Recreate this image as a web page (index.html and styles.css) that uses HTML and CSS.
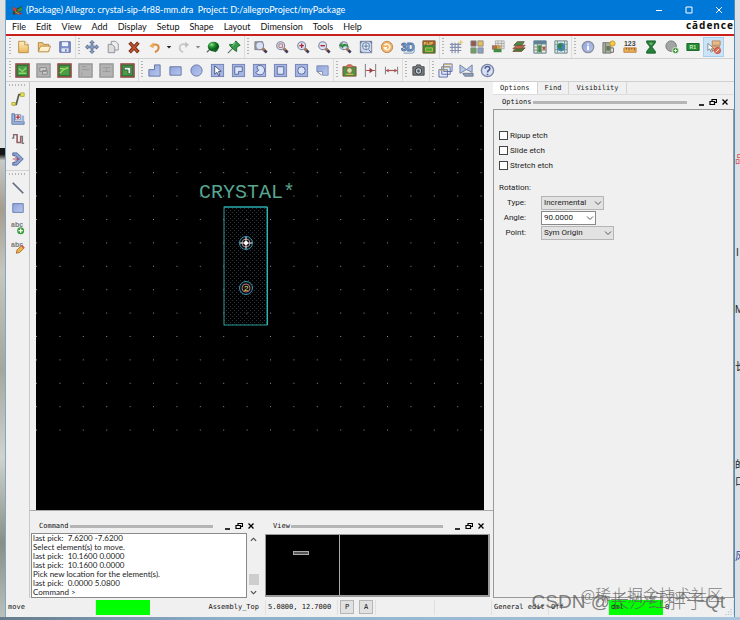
FILE: index.html
```html
<!DOCTYPE html>
<html lang="en">
<head>
<meta charset="utf-8">
<title>Allegro - crystal-sip-4r88-mm.dra</title>
<link rel="stylesheet" href="styles.css">
</head>
<body>
<svg class="defs" aria-hidden="true">
  <defs>
    <linearGradient id="blue" x1="0" y1="0" x2="1" y2="1"><stop offset="0" stop-color="#8fa3dc"/><stop offset="1" stop-color="#b9c8ee"/></linearGradient>
    <radialGradient id="green" cx=".35" cy=".3"><stop offset="0" stop-color="#8fe08a"/><stop offset=".5" stop-color="#2c9a3a"/><stop offset="1" stop-color="#0b5c1b"/></radialGradient>
    <linearGradient id="gold" x1="0" y1="0" x2="0" y2="1"><stop offset="0" stop-color="#fff0c4"/><stop offset="1" stop-color="#eab455"/></linearGradient>
    <symbol id="lens" viewBox="0 0 16 16"><path d="M9.500 9.500l5 4.800" stroke="#3d3a55" stroke-width="3"/><path d="M10 9.600l2 2" stroke="#c57a3c" stroke-width="2.400"/><circle cx="6.500" cy="6.500" r="4.500" fill="#d9e2f2" stroke="#8288a0" stroke-width="1.300"/></symbol>
    <symbol id="board" viewBox="0 0 16 16"><rect x="1" y="1" width="14" height="14" fill="#4d9a48" stroke="#9d3f43" stroke-width="1.500"/><rect x="2.500" y="2.500" width="11" height="11" fill="none" stroke="#267337"/></symbol>
    <symbol id="board-off" viewBox="0 0 16 16"><rect x="1" y="1" width="14" height="14" fill="#b3b3b3" stroke="#999" stroke-width="1.500"/></symbol>
    <symbol id="tile" viewBox="0 0 16 16"><rect x="1.500" y="1.500" width="13" height="13" fill="#a5b5e3" stroke="#7482b4"/></symbol>
    <symbol id="down" viewBox="0 0 8 8"><path d="M1 2.500l3 3 3-3" fill="none" stroke="#555"/></symbol>
    <symbol id="min" viewBox="0 0 8 8"><path d="M2 7h5" stroke="#000" stroke-width="1.600"/></symbol>
    <symbol id="float" viewBox="0 0 8 8"><path d="M3 3V1.500h4.500v3H5.500M1 3.500h4.500v3H1z" fill="none" stroke="#000" stroke-width="1.200"/></symbol>
    <symbol id="close" viewBox="0 0 8 8"><path d="M1.500 1.500l5 5M6.500 1.500l-5 5" stroke="#000" stroke-width="1.300"/></symbol>
  </defs>
</svg>
<div class="desktop">
  <div class="behind-left"></div>
  <div class="window">
    <header class="titlebar">
      <svg class="app-icon" viewBox="0 0 12 12"><path d="M1 2l4 2 6-3v5l-5 3-5 2z" fill="#244834"/><path d="M1 2l4 2v3l-4-1z" fill="#d33b32"/><path d="M6 5l5-3v4l-5 2z" fill="#348f3b"/><path d="M2 9l3-2 6 2-2 2z" fill="#b72c30"/><path d="M3 7l5 3" stroke="#65ce57"/></svg>
      <h1>(Package) Allegro: crystal-sip-4r88-mm.dra&nbsp; Project: D:/allegroProject/myPackage</h1>
      <div class="window-buttons">
        <button aria-label="Minimize"><svg viewBox="0 0 8 8"><path d="M1 4.500h6" stroke="#fff"/></svg></button>
        <button aria-label="Maximize"><svg viewBox="0 0 8 8"><path d="M1 1h6v6H1z" fill="none" stroke="#fff"/></svg></button>
        <button aria-label="Close"><svg viewBox="0 0 8 8"><path d="M1 1l6 6M7 1L1 7" stroke="#fff"/></svg></button>
      </div>
    </header>
    <nav class="menubar">
      <button>File</button><button>Edit</button><button>View</button><button>Add</button><button>Display</button><button>Setup</button><button>Shape</button><button>Layout</button><button>Dimension</button><button>Tools</button><button>Help</button>
      <span class="brand">cādence</span>
    </nav>

    <div class="toolbar">
      <div class="group">
        <button aria-label="New"><svg viewBox="0 0 16 16"><path d="M3 1.500h7l4 4v9H3z" fill="url(#gold)" stroke="#b48b45"/><path d="M10 1.500v4h4" fill="#fff5d8" stroke="#b48b45"/></svg></button>
        <button aria-label="Open"><svg viewBox="0 0 16 16"><path d="M1.500 13V3h5l1 2h6v8z" fill="#efc678" stroke="#ae803a"/><path d="M1.500 13.500L4 7h11.500L13 13.500z" fill="#fff1cd" stroke="#b88a44"/></svg></button>
        <button aria-label="Save"><svg viewBox="0 0 16 16"><path d="M2 2h12v12H2z" fill="#7e91cc" stroke="#51629f"/><path d="M4.500 2.500h7V7h-7z" fill="#eef2ff"/><path d="M4 9.500h8v4H4z" fill="#dfe6f8"/><path d="M9 10.500v2.500" stroke="#53639a" stroke-width="1.500"/></svg></button>
      </div>
      <div class="group">
        <button aria-label="Move"><svg viewBox="0 0 16 16"><path d="M8 .5L10.500 3H9v4h4V5.500L15.500 8 13 10.500V9H9v4h1.500L8 15.500 5.500 13H7V9H3v1.500L.5 8 3 5.500V7h4V3H5.500z" fill="#92a7c8" stroke="#566b91"/></svg></button>
        <button aria-label="Copy"><svg viewBox="0 0 16 16"><path d="M6 1.500h5l3 3v7H6z" fill="#ededed" stroke="#8b8f96"/><path d="M2.500 5H7l3 3v6.500H2.500z" fill="#dcdcdc" stroke="#858a91"/></svg></button>
        <button aria-label="Delete"><svg viewBox="0 0 16 16"><path d="M3 3l10 11M13 3L3 14" stroke="#6c2b1b" stroke-width="4"/><path d="M3.500 3.500l9 10M12.500 3.500l-9 10" stroke="#c0532c" stroke-width="2"/></svg></button>
        <button aria-label="Undo"><svg viewBox="0 0 16 16"><path d="M4 7c5-4 9-1 8 3-.5 2-2 3-4 4" fill="none" stroke="#d8893e" stroke-width="2.300"/><path d="M6.500 2.500v7L1.500 7z" fill="#edaa58"/></svg></button>
        <button class="drop" aria-label="Undo list"><svg viewBox="0 0 8 8"><path d="M1 2.500h6L4 6z" fill="#222"/></svg></button>
        <button aria-label="Redo"><svg viewBox="0 0 16 16"><path d="M11 6c-5-3-8 0-8 3 0 2 2 4 4 5" fill="none" stroke="#c6c6c6" stroke-width="2"/><path d="M9.500 2v7l4-3.500z" fill="#bdbdbd"/></svg></button>
        <button class="drop" aria-label="Redo list"><svg viewBox="0 0 8 8"><path d="M1 2.500h6L4 6z" fill="#888"/></svg></button>
        <button aria-label="Fix"><svg viewBox="0 0 16 16"><path d="M5 10l-4 4" stroke="#607060" stroke-width="1.500"/><ellipse cx="8.500" cy="7.500" rx="6.500" ry="5.500" fill="url(#green)"/><path d="M3 10l8 4 3-3z" fill="#16652a"/></svg></button>
        <button aria-label="Unfix"><svg viewBox="0 0 16 16"><path d="M1 15l6-6" stroke="#65756a" stroke-width="1.500"/><path d="M10 1l5 5-2 1-2 2v4L9 12 3.500 7 3 5h4l2-2z" fill="#359b48" stroke="#16632a"/><path d="M10 3L6 7" stroke="#8cdd89"/></svg></button>
      </div>
      <div class="group">
        <button aria-label="Zoom window"><svg viewBox="0 0 16 16"><path d="M1 2h9v9H1z" fill="#b1a290" stroke="#7b7b87"/><use href="#lens"/></svg></button>
        <button aria-label="Zoom fit"><svg viewBox="0 0 16 16"><use href="#lens"/><path d="M4.500 4.500h4v4h-4z" fill="none" stroke="#bd6a6c"/></svg></button>
        <button aria-label="Zoom in"><svg viewBox="0 0 16 16"><use href="#lens"/><path d="M4 6.500h5M6.500 4v5" stroke="#af2632" stroke-width="1.500"/></svg></button>
        <button aria-label="Zoom out"><svg viewBox="0 0 16 16"><use href="#lens"/><path d="M4 6.500h5" stroke="#af2632" stroke-width="1.600"/></svg></button>
        <button aria-label="Zoom previous"><svg viewBox="0 0 16 16"><use href="#lens"/><path d="M4 6c3-3 7-2 9 3-4-3-6-2-7-1v2L1 6l5-4z" fill="#368b45"/></svg></button>
        <button aria-label="Zoom selection"><svg viewBox="0 0 16 16"><path d="M1.500 1.500h13v13h-13z" fill="#cbd7eb" stroke="#6f7c99"/><circle cx="8" cy="7" r="4" fill="#eef3fb" stroke="#597399"/><path d="M5 7h6M8 4v6M2 4V2h2M12 2h2v2M2 12v2h2M11 11l3 3" stroke="#506c96" fill="none"/></svg></button>
        <button aria-label="Redraw"><svg viewBox="0 0 16 16"><circle cx="8" cy="8" r="6.500" fill="#f0b265" stroke="#b9875a"/><path d="M5 6c3-3 7 0 6 3s-5 3-6 0h3" fill="none" stroke="#fff5df" stroke-width="1.800"/></svg></button>
        <button aria-label="3D view"><svg viewBox="0 0 16 16"><text x="0" y="13" class="g-3d">3D</text><path d="M13 3l2 3v8l-2 1H3" fill="none" stroke="#6b8bb2"/></svg></button>
        <button aria-label="Flip design"><svg viewBox="0 0 16 16"><path d="M1 1h14v14H1z" fill="#378b3d" stroke="#79562c"/><path d="M1 1h14v5H1z" fill="#9e572e"/><text x="2" y="5.500" class="g-flip">FLIP</text><path d="M4 9h8v4H4z" fill="#4aab3d" stroke="#e1b63c"/></svg></button>
      </div>
      <div class="group">
        <button aria-label="Grid toggle"><svg viewBox="0 0 16 16"><path d="M3.500 3v12M7 3v12M10.500 3v12M1 5h13M1 8.500h13M1 12h13" stroke="#858eac" stroke-width="1.300"/><path d="M13.500 0v5M11 2.500h5" stroke="#e9bd53"/></svg></button>
        <button aria-label="Color"><svg viewBox="0 0 16 16"><path d="M1 1h6v6H1z" fill="#8d5a4c"/><path d="M9 1h6v6H9z" fill="#e6bd58"/><path d="M1 9h6v6H1z" fill="#67a35e"/><path d="M9 9h6v6H9z" fill="#8a9fcc"/><path d="M1 1h6v6H1zM9 1h6v6H9zM1 9h6v6H1zM9 9h6v6H9z" fill="none" stroke="#888"/></svg></button>
        <button aria-label="Shadow"><svg viewBox="0 0 16 16"><path d="M5 1h10v9H5zM8 1v9M12 1v9M5 4h10M5 7h10" fill="#e6e6e6" stroke="#aaa"/><path d="M1 6h6v5H1z" fill="#ad7158"/><path d="M3 10h9v4H3z" fill="#438a46"/><path d="M7 6h4v4H7z" fill="#cf9d3d"/></svg></button>
        <button aria-label="Layers"><svg viewBox="0 0 16 16"><path d="M1 13l4-4h10l-4 4z" fill="#3c813c" stroke="#7d4f35"/><path d="M1 10l4-4h10l-4 4z" fill="#bb6651" stroke="#7d4f35"/><path d="M2 6l4-4h8l-3 4z" fill="#4d8d47" stroke="#5e5435"/></svg></button>
        <button aria-label="Constraint manager"><svg viewBox="0 0 16 16"><path d="M1 1h14v14H1z" fill="#e5eadb" stroke="#4f7186"/><path d="M1 1h14v4H1z" fill="#5d819b"/><path d="M5 2v13M9.500 2v13M1 8h14M1 11.500h14" stroke="#718271"/><path d="M6 6h3v8H6z" fill="#348748"/><path d="M11 8h3v3h-3z" fill="#c5473c"/></svg></button>
        <button aria-label="World view"><svg viewBox="0 0 16 16"><path d="M1 1h14v14H1z" fill="#dee8df" stroke="#5a7d85"/><path d="M4 1v14M12 1v14M1 5h14M1 11h14" stroke="#78948e"/><circle cx="8" cy="8" r="5" fill="#4286b5"/><path d="M4 6l3-2 3 2-2 2 1 3-3-1z" fill="#3b8140"/></svg></button>
      </div>
      <div class="group">
        <button aria-label="Show element"><svg viewBox="0 0 16 16"><circle cx="8" cy="8" r="6.500" fill="url(#blue)" stroke="#8c8f9c" stroke-width="1.500"/><path d="M8 6.500v5M8 4v1.500" stroke="#fff" stroke-width="2"/></svg></button>
        <button aria-label="Cross section"><svg viewBox="0 0 16 16"><path d="M1 3h9v12H1z" fill="#a9aaa4" stroke="#727369"/><path d="M4 3v12" stroke="#777"/><path d="M5 7h4v5H5z" fill="#40854b"/><path d="M6 8h2v2H6z" fill="#c44"/><path d="M10 9h3v5h-3" fill="none" stroke="#555"/><circle cx="12" cy="4" r="3" fill="#f5ca43" stroke="#c09633"/></svg></button>
        <button aria-label="Measure"><svg viewBox="0 0 16 16"><text x="1" y="7" class="g-123">123</text><path d="M1 9h14v5H1z" fill="#eab35c" stroke="#bd772e"/><path d="M4 9v2M7 9v3M10 9v2M13 9v3" stroke="#865427"/></svg></button>
        <button aria-label="Timing"><svg viewBox="0 0 16 16"><path d="M3 1h10v2l-4 5 4 5v2H3v-2l4-5-4-5z" fill="#26803c" stroke="#145d26"/><path d="M5.500 3h5L8 6z" fill="#73bf68"/></svg></button>
        <button aria-label="Add circle"><svg viewBox="0 0 16 16"><circle cx="7" cy="7" r="6" fill="#a3a5a4" stroke="#727674"/><circle cx="12" cy="12" r="3.500" fill="#388f38" stroke="#d8eed8"/><path d="M12 10v4M10 12h4" stroke="#fff"/></svg></button>
        <button aria-label="Reference designator"><svg viewBox="0 0 16 16"><path d="M1 4h14v8H1z" fill="#218c35" stroke="#135f21"/><text x="4" y="10" class="g-r1">R1</text></svg></button>
        <button class="on" aria-label="Placement edit" aria-pressed="true"><svg viewBox="0 0 16 16"><path d="M6 1h9v5H6zM4 7h10v5H4z" fill="#e6bb89" stroke="#b78053"/><circle cx="12" cy="12" r="3.500" fill="#df7357" stroke="#c33f35"/><path d="M10 14l4-4" stroke="#fff"/><path d="M1 4v8l2-2 2 4 1-1-1-3h3z" fill="#fff" stroke="#555" stroke-width=".7"/></svg></button>
      </div>
    </div>

    <div class="toolbar second">
      <div class="group">
        <button aria-label="General edit mode"><svg viewBox="0 0 16 16"><use href="#board"/><path d="M4 6l4 3 4-4M4 11h8" stroke="#8bd864" fill="none" stroke-width="1.500"/></svg></button>
        <button aria-label="Placement mode"><svg viewBox="0 0 16 16"><use href="#board-off"/><path d="M4 5h7v4H4zM7 8h5v4H7z" fill="#ccc" stroke="#8a8a8a"/></svg></button>
        <button aria-label="Etch edit mode"><svg viewBox="0 0 16 16"><use href="#board"/><path d="M3 11l4-4 5-2M3 6h4" stroke="#9bdd63" fill="none" stroke-width="1.500"/></svg></button>
        <button aria-label="Signal mode"><svg viewBox="0 0 16 16"><use href="#board-off"/><path d="M4 4h5M4 7h8M4 10v3" stroke="#999"/></svg></button>
        <button aria-label="Ripup mode"><svg viewBox="0 0 16 16"><use href="#board-off"/><path d="M4 5h8M4 9h8M8 5v5" stroke="#999"/></svg></button>
        <button aria-label="Shape edit mode"><svg viewBox="0 0 16 16"><use href="#board"/><path d="M4.500 4.500h7v7h-3v-4h-4z" fill="#eee" stroke="#2b633d"/></svg></button>
      </div>
      <div class="group">
        <button aria-label="Shape polygon"><svg viewBox="0 0 16 16"><path d="M8 2h6v12H2V7h6z" fill="url(#blue)" stroke="#6674a4"/></svg></button>
        <button aria-label="Shape rectangle"><svg viewBox="0 0 16 16"><path d="M2 4h12v9H2z" fill="url(#blue)" stroke="#6674a4"/></svg></button>
        <button aria-label="Shape circle"><svg viewBox="0 0 16 16"><circle cx="8" cy="8" r="6" fill="url(#blue)" stroke="#6674a4"/></svg></button>
        <button aria-label="Shape select"><svg viewBox="0 0 16 16"><use href="#tile"/><path d="M5 3v9l2.500-2 2 4 1-1-1.500-4h3z" fill="#fff" stroke="#4b587f"/></svg></button>
        <button aria-label="Shape void polygon"><svg viewBox="0 0 16 16"><use href="#tile"/><path d="M4 4h8v5H8v3H4z" fill="#dce5fa" stroke="#596896"/></svg></button>
        <button aria-label="Shape void arc"><svg viewBox="0 0 16 16"><use href="#tile"/><path d="M5 4a5 5 0 1 1-1 6l3-2z" fill="#dce5fa" stroke="#596896"/></svg></button>
        <button aria-label="Void rectangle"><svg viewBox="0 0 16 16"><use href="#tile"/><path d="M4.500 4h7v8h-7z" fill="#dce5fa" stroke="#596896"/></svg></button>
        <button aria-label="Void circle"><svg viewBox="0 0 16 16"><use href="#tile"/><circle cx="8" cy="8" r="4" fill="#dce5fa" stroke="#596896"/></svg></button>
        <button aria-label="Delete islands"><svg viewBox="0 0 16 16"><path d="M2 3h12v10H8V9H2z" fill="url(#blue)" stroke="#818db5"/><path d="M2 9l5 4" stroke="#777"/></svg></button>
      </div>
      <div class="group">
        <button aria-label="Place component"><svg viewBox="0 0 16 16"><path d="M1 4h14v10H1z" fill="#4b9345" stroke="#87522f"/><path d="M4 4l2-2h4l2 2" fill="#dd825b" stroke="#a64238"/><circle cx="8" cy="8" r="3" fill="#cbe9a7" stroke="#9c5147"/><path d="M4 12h8" stroke="#e1d04b"/></svg></button>
        <button aria-label="Spacing"><svg viewBox="0 0 16 16"><path d="M2.500 1v14M13.500 1v14" stroke="#777"/><path d="M3 8h10" stroke="#a94b4b"/><path d="M7 5l4 3-4 3z" fill="#9e343b"/></svg></button>
        <button aria-label="Linear dimension"><svg viewBox="0 0 16 16"><path d="M1.500 4v8M14.500 4v8" stroke="#777"/><path d="M2 8h12" stroke="#aa5555" stroke-width="1.300"/><path d="M2 8l3-2v4zM14 8l-3-2v4z" fill="#aa5555"/></svg></button>
      </div>
      <div class="group">
        <button aria-label="Snapshot"><svg viewBox="0 0 16 16"><path d="M2 4h3l1-2h4l1 2h3v9H2z" fill="#777a7d" stroke="#484b4e"/><circle cx="8" cy="8.500" r="3.500" fill="#c4cbd0" stroke="#303337"/><circle cx="8" cy="8.500" r="1.500" fill="#4c5c69"/></svg></button>
      </div>
      <div class="group">
        <button aria-label="Cascade windows"><svg viewBox="0 0 16 16"><path d="M6 1h9v8H6zM4 4h9v8H4zM1 7h9v8H1z" fill="#e3e9fb" stroke="#5d6da4"/><path d="M6 1.500h9M4 4.500h9M1 7.500h9" stroke="#c6b263"/></svg></button>
        <button aria-label="Mirror"><svg viewBox="0 0 16 16"><path d="M1 2l7 5 6-5v8L8 7l-7 4z" fill="#b9c8e6" stroke="#7180a3"/><path d="M4 11h11v3H6z" fill="#92a0b6" stroke="#6d7890"/></svg></button>
        <button aria-label="Help"><svg viewBox="0 0 16 16"><circle cx="8" cy="8" r="6.500" fill="#dae1f4" stroke="#7c87a8" stroke-width="1.500"/><path d="M5.500 6c0-3 5-3 5 0 0 2-2.500 1.500-2.500 4M8 11.500V13" fill="none" stroke="#4e5d93" stroke-width="1.700"/></svg></button>
      </div>
    </div>

    <div class="main">
      <aside class="side-tools">
        <div class="side-group">
          <button aria-label="Add connect"><svg viewBox="0 0 16 16"><path d="M2 14h4l3-11h5" fill="none" stroke="#5b604d" stroke-width="2"/><path d="M1 12h4v3H1zM11 1h4v4h-4z" fill="#ece74d" stroke="#a8a33d"/></svg></button>
          <button aria-label="Slide"><svg viewBox="0 0 16 16"><path d="M1 2h3v9h11v3H1z" fill="#9ab4df" stroke="#6073a0"/><path d="M5 3h6v6H5z" fill="#dfe5f0" stroke="#7f8daf"/><path d="M8 3v5M6 6h4" stroke="#bf3745" stroke-width="1.500"/><path d="M12 4h3v7h-3z" fill="#9ab4df"/></svg></button>
          <button aria-label="Delay tune"><svg viewBox="0 0 16 16"><path d="M1 7h2V3h4v9h4V5h2v8h2" fill="none" stroke="#777" stroke-width="1.600"/><path d="M3 3h4v9h4V6" fill="none" stroke="#b44e57"/></svg></button>
          <button aria-label="Custom smooth"><svg viewBox="0 0 16 16"><path d="M2 1h5l7 7-7 7H2v-3h3l4-4-4-4H2z" fill="#8ba3d2" stroke="#4e6398"/><path d="M2 8h8M4 5l4 3-4 3" fill="none" stroke="#9b4863"/></svg></button>
        </div>
        <div class="side-group">
          <button aria-label="Add line"><svg viewBox="0 0 16 16"><path d="M2 2l12 12" stroke="#666b82" stroke-width="2"/></svg></button>
          <button aria-label="Add rectangle"><svg viewBox="0 0 16 16"><path d="M2 3h12v10H2z" fill="url(#blue)" stroke="#6078a8"/></svg></button>
          <button aria-label="Add text"><svg viewBox="0 0 16 16"><text x="0" y="7" class="g-abc">abc</text><circle cx="11" cy="11" r="4" fill="#3b9c3d"/><path d="M11 8.500v5M8.500 11h5" stroke="#fff" stroke-width="1.500"/></svg></button>
          <button aria-label="Edit text"><svg viewBox="0 0 16 16"><text x="0" y="7" class="g-abc">abc</text><path d="M6 14l1-4 5-5 3 3-5 5z" fill="#eeb348" stroke="#a2692e"/><path d="M12 5l3 3" stroke="#c65c54" stroke-width="2"/></svg></button>
        </div>
      </aside>

      <div class="center">
        <div class="canvas">
          <svg viewBox="0 0 448 422" preserveAspectRatio="xMinYMin slice" role="img" aria-label="Package drawing">
            <defs>
              <pattern id="grid" x="0" y="14" width="23.400" height="23.400" patternUnits="userSpaceOnUse"><path d="M0 .5h1" stroke="#8b9196"/></pattern>
              <pattern id="mesh" width="4" height="4" patternUnits="userSpaceOnUse"><path d="M0 .5h1M2 2.500h1" stroke="#263943"/></pattern>
            </defs>
            <rect y="14" width="448" height="330" fill="url(#grid)"/>
            <text x="163" y="110" class="refdes">CRYSTAL*</text>
            <rect x="188" y="119" width="43" height="118" fill="url(#mesh)" stroke="#2a9c94"/>
            <path d="M231.500 119v118M188 119h43" stroke="#2bb3bd"/>
            <circle cx="210" cy="155" r="6.500" fill="#0b1014" stroke="#3a93b0"/>
            <circle cx="210" cy="155" r="4" fill="none" stroke="#a8827d"/>
            <path d="M204 155h12M210 149v12" stroke="#eee"/>
            <circle cx="210" cy="155" r="2" fill="#fff"/>
            <circle cx="210" cy="200" r="6.500" fill="#0b1014" stroke="#3a93b0"/>
            <circle cx="210" cy="200" r="4" fill="none" stroke="#b66f70"/>
            <text x="208" y="203" class="pin-no">2</text>
          </svg>
        </div>
        <div class="docks">
          <section class="dock">
            <div class="dock-head"><h2>Command</h2><span class="grip"></span><button aria-label="Minimize"><svg><use href="#min"/></svg></button><button aria-label="Float"><svg><use href="#float"/></svg></button><button aria-label="Close"><svg><use href="#close"/></svg></button></div>
            <div class="console">
              <div class="log">
                <p>last pick:&nbsp; 7.6200 -7.6200</p>
                <p>Select element(s) to move.</p>
                <p>last pick:&nbsp; 10.1600 0.0000</p>
                <p>last pick:&nbsp; 10.1600 0.0000</p>
                <p>Pick new location for the element(s).</p>
                <p>last pick:&nbsp; 0.0000 5.0800</p>
                <p>Command &gt;</p>
              </div>
              <div class="scroll"><svg viewBox="0 0 8 8"><path d="M1 5.500l3-3 3 3" fill="none" stroke="#444" stroke-width="1.300"/></svg><span class="thumb"></span><svg viewBox="0 0 8 8"><path d="M1 2.500l3 3 3-3" fill="none" stroke="#444" stroke-width="1.300"/></svg></div>
            </div>
          </section>
          <section class="dock">
            <div class="dock-head"><h2>View</h2><span class="grip"></span><button aria-label="Minimize"><svg><use href="#min"/></svg></button><button aria-label="Float"><svg><use href="#float"/></svg></button><button aria-label="Close"><svg><use href="#close"/></svg></button></div>
            <div class="overview"><div class="overview-page"><span class="overview-mark"></span></div></div>
          </section>
        </div>
      </div>

      <section class="options">
        <div class="tabs"><button class="active">Options</button><button>Find</button><button>Visibility</button></div>
        <div class="dock-head"><h2>Options</h2><span class="grip"></span><button aria-label="Minimize"><svg><use href="#min"/></svg></button><button aria-label="Float"><svg><use href="#float"/></svg></button><button aria-label="Close"><svg><use href="#close"/></svg></button></div>
        <form class="options-body">
          <label class="check"><input type="checkbox">Ripup etch</label>
          <label class="check"><input type="checkbox">Slide etch</label>
          <label class="check"><input type="checkbox">Stretch etch</label>
          <fieldset>
            <legend>Rotation:</legend>
            <div class="field"><label for="type">Type:</label><span class="combo medium"><select id="type"><option>Incremental</option></select><svg><use href="#down"/></svg></span></div>
            <div class="field"><label for="angle">Angle:</label><span class="combo small"><input id="angle" type="text" value="90.0000"><svg><use href="#down"/></svg></span></div>
            <div class="field"><label for="point">Point:</label><span class="combo large"><select id="point"><option>Sym Origin</option></select><svg><use href="#down"/></svg></span></div>
          </fieldset>
        </form>
      </section>
    </div>

    <footer class="status">
      <span>move</span><span class="ok"></span><span class="layer">Assembly_Top</span><span>5.0800, 12.7000</span><span class="toggles"><button>P</button><button>A</button></span><span></span><span></span><span>General edit</span><span>Off</span><span class="ok">dml</span><span>0</span>
      <svg class="resize" viewBox="0 0 8 8"><path d="M7 1v1M7 4v1M4 4v1M7 7v1M4 7v1M1 7v1" stroke="#a5b5c5" stroke-width="1.500"/></svg>
    </footer>
  </div>
  <div class="behind-right"><span class="red">品</span><span class="bar">I</span><span class="em">M</span><span class="cjk">长</span><span class="lower">的</span><span class="lower2">口</span><span class="link">风</span></div>
  <div class="watermark upper">@稀土掘金技术社区</div>
  <div class="watermark csdn">CSDN @长沙红胖子Qt</div>
</div>
</body>
</html>
```
FILE: styles.css
```css
* { box-sizing: border-box; }

body {
  margin: 0;
  font: 8px/12px Roboto, "Liberation Sans", sans-serif;
  color: #222;
}

h1, h2, p { margin: 0; font-weight: normal; }
button { padding: 0; border: 0; background: none; color: inherit; font: inherit; }
svg { display: block; }
.defs { position: absolute; width: 0; height: 0; }

.desktop {
  position: relative;
  display: grid;
  grid-template-columns: 6px 1fr 6px;
  min-height: 100vh;
  padding-bottom: 3px;
  background: linear-gradient(90deg, #647b8c, #8cb0ca 30%, #a9c6dc);
  overflow: hidden;
}

.behind-left {
  border-right: 1px solid #7da7c4;
  background: linear-gradient(#dfe0e0 0 24%, #151515 24% 25%, #c9c9c5 26%, #a79c8e 34%, #c7c6bd 44%, #a4a79c 60%, #d0d3ce 74%, #898f85 88%, #b9c1bc);
}

.behind-right {
  position: relative;
  border-left: 1px solid #4c8dba;
  background: #dde0e4;
  overflow: hidden;
}
.behind-right span {
  position: absolute;
  left: 0;
  font: 10px/12px "Liberation Sans", "Noto Sans CJK SC", sans-serif;
}
.behind-right .red { top: 154px; color: #d94b50; }
.behind-right .bar { top: 247px; left: 1px; }
.behind-right .em { top: 304px; }
.behind-right .cjk { top: 361px; }
.behind-right .lower { top: 459px; }
.behind-right .lower2 { top: 476px; }
.behind-right .link { top: 551px; color: #283f9e; }

.window {
  display: grid;
  grid-template-rows: 20px 16px 23px 23px 1fr 19px;
  min-width: 0;
  background: #f0f0f0;
}

.titlebar {
  display: flex;
  align-items: center;
  padding-left: 6px;
  background: #0078d7;
  color: #fff;
}
.app-icon { width: 11px; height: 11px; }
.titlebar h1 { margin-left: 3px; font: 9px/18px Lato, sans-serif; }
.window-buttons { display: flex; margin-left: auto; }
.window-buttons button { display: grid; place-items: center; width: 30px; height: 18px; }
.window-buttons svg { width: 8px; height: 8px; }

.menubar {
  display: flex;
  align-items: flex-start;
  gap: 10px;
  padding-left: 6px;
  border-bottom: 2px solid #c9201d;
  background: #fff;
  color: #111;
  font: 9px/14px Lato, sans-serif;
}
.brand { margin-left: auto; font: bold 10px/10px "Noto Sans", sans-serif; letter-spacing: 1px; }

.toolbar { display: flex; border-bottom: 1px solid #d0d0d0; background: #f2f2f2; }
.group { display: flex; align-items: center; }
.group::before {
  content: "";
  width: 2px;
  height: 18px;
  margin: 0 1px 0 3px;
  background: repeating-linear-gradient(#b4b4b4 0 1px, transparent 1px 3px);
}
.group + .group { box-shadow: inset 1px 0 #ddd; }
.group button { display: grid; place-items: center; width: 21px; height: 20px; }
.group .drop { width: 8px; }
.group svg { width: 14px; height: 14px; }
.group .drop svg { width: 6px; height: 6px; }
.second .group svg { width: 15px; height: 15px; }
.group .on { border: 1px solid #a9cfee; background: #cbe3f7; }

.g-3d { fill: #9cb8df; stroke: #4d75a6; stroke-width: 1px; font: bold 12px "Liberation Sans", sans-serif; }
.g-flip { fill: #f4db6a; font: bold 5px "Liberation Sans", sans-serif; }
.g-123 { fill: #444; font: bold 8px "Liberation Sans", sans-serif; }
.g-r1 { fill: #c9f0b4; font: bold 6px "Liberation Sans", sans-serif; }
.g-abc { fill: #777; font: bold 8px "Liberation Sans", sans-serif; }

.main { display: grid; grid-template-columns: 24px minmax(0, 1fr) 241px; min-height: 0; }

.side-tools { border-right: 1px solid #c8c8c8; }
.side-group { display: grid; justify-items: center; padding-bottom: 1px; }
.side-group + .side-group { border-top: 1px solid #d3d3d3; }
.side-group::before {
  content: "";
  width: 18px;
  height: 2px;
  margin: 2px 0 3px;
  background: repeating-linear-gradient(90deg, #b4b4b4 0 1px, transparent 1px 3px);
}
.side-group button { display: grid; place-items: center; width: 22px; height: 20px; }
.side-group svg { width: 14px; height: 14px; }

.center { display: grid; grid-template-rows: minmax(0, 1fr) 88px; min-height: 0; }
.canvas { margin: 6px 9px 0 6px; background: #000; overflow: hidden; }
.canvas svg { width: 100%; height: 100%; }
.refdes { fill: #58a590; font: 20px "Liberation Mono", monospace; }
.pin-no { fill: #eee35c; font: 8px "Liberation Sans", sans-serif; }

.docks { display: grid; grid-template-columns: 230fr 226fr; gap: 4px; padding-right: 3px; border-top: 1px solid #aaa; }
.dock { display: grid; grid-template-rows: 22px 1fr; min-width: 0; }
.dock-head { display: flex; align-items: center; padding: 8px 3px 0 9px; }
.dock-head h2 { font: 7px/12px "DejaVu Sans Mono", monospace; color: #111; }
.grip { flex: 1; height: 3px; margin: 0 8px 0 1px; background: #b5b5b5; }
.dock-head button { width: 12px; height: 12px; padding: 2px; }
.dock-head svg { width: 8px; height: 8px; }

.console {
  display: grid;
  grid-template-columns: 1fr 13px;
  margin: 0 0 0 1px;
}
.log { padding-left: 1px; border: 1px solid #8a8a8a; background: #fff; font: 8px/9px Lato, "Liberation Sans", sans-serif; }
.scroll { display: flex; flex-direction: column; align-items: center; padding: 3px 0 2px; }
.scroll svg { width: 7px; height: 7px; }
.scroll .thumb { width: 10px; height: 11px; margin-top: auto; margin-bottom: 4px; background: #cdcdcd; }

.overview {
  display: grid;
  grid-template-columns: 1fr 2fr;
  margin: 1px 0 1px 1px;
  border: solid #999;
  border-width: 1px 2px 2px 1px;
  background: #000;
}
.overview-page { padding: 16px 0 0 27px; border-right: 1px solid #aaa; }
.overview-mark { display: block; width: 16px; height: 4px; border: 1px solid #aaa; background: #555; }

.options { display: grid; grid-template-rows: 12px 15px 1fr; min-width: 0; }
.tabs { display: flex; font: 7px/12px "DejaVu Sans Mono", monospace; }
.tabs button { padding: 0 7px; border-right: 1px solid #d5d5d5; }
.tabs .active { background: #fff; }
.options .dock-head { padding-top: 0; border-top: 1px solid #ddd; }
.options-body { padding: 18px 0 0 5px; border: 1px solid #999; }
.check { display: flex; align-items: center; gap: 2px; height: 15px; }
.check input { appearance: none; width: 9px; height: 9px; margin: 0; border: 1px solid #444; background: #fff; }
fieldset { min-width: 0; margin: 8px 0 0; padding: 0; border: 0; }
legend { padding: 0; line-height: 14px; }
.field { display: flex; align-items: center; height: 15px; }
.field label { width: 42px; padding-right: 15px; text-align: right; }
.combo { position: relative; height: 14px; }
.medium { width: 63px; }
.small { width: 55px; }
.large { width: 73px; }
.combo select, .combo input {
  appearance: none;
  width: 100%;
  height: 14px;
  padding: 0 2px;
  border: 1px solid #b5b5b5;
  border-radius: 0;
  background: #e2e2e2;
  color: #222;
  font: 8px/12px Roboto, "Liberation Sans", sans-serif;
  display: block;
}
.combo input { border-color: #888; background: #fff; }
.combo svg { position: absolute; right: 2px; top: 3px; width: 8px; height: 8px; pointer-events: none; }

.status {
  position: relative;
  display: grid;
  grid-template-columns: 90fr 54fr 116fr 72fr 38fr 59fr 57fr 57fr 60fr 54fr 71fr;
  align-items: center;
  font: 7px/15px "DejaVu Sans Mono", monospace;
  color: #111;
}
.status > span { height: 15px; padding-left: 2px; border-right: 1px solid #e0e0e0; white-space: nowrap; }
.status .ok { border: 0; background: #0f0; }
.status .layer { padding-right: 6px; text-align: right; }
.status .toggles { display: flex; gap: 5px; }
.toggles button { width: 14px; height: 14px; border: 1px solid #b5b5b5; background: #e1e1e1; line-height: 10px; }
.resize { position: absolute; right: 2px; bottom: 2px; width: 7px; height: 7px; }

.watermark {
  position: absolute;
  color: rgba(95, 95, 95, .8);
  white-space: nowrap;
  pointer-events: none;
}
.upper { right: 17px; bottom: 15px; font: 16px/22px "Noto Sans CJK SC", sans-serif; font-weight: 300; }
.csdn { right: 15px; bottom: 5px; font: 19px/26px "Liberation Sans", "Noto Sans CJK SC", sans-serif; font-weight: 300; }
```
